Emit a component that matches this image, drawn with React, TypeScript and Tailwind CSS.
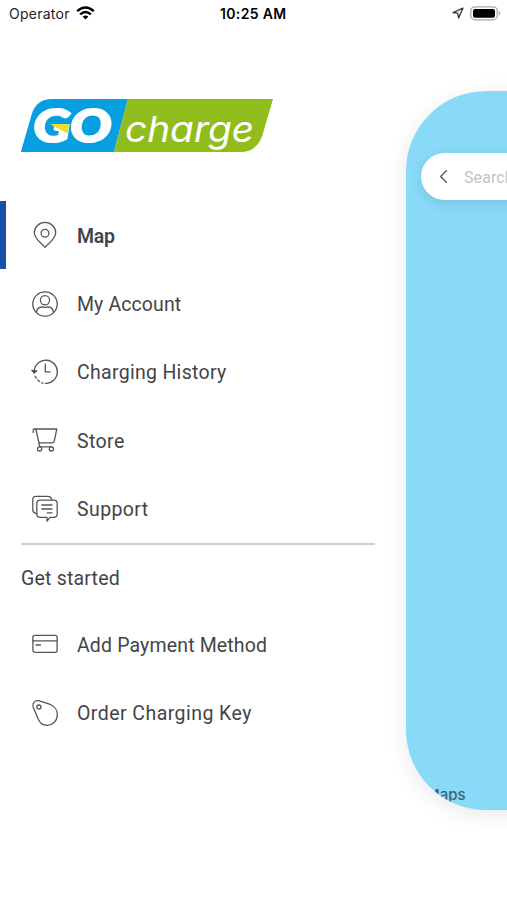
import React from 'react';
import { ChevronLeft } from 'lucide-react';

const iconProps = {
  width: 28,
  height: 28,
  viewBox: '0 0 28 28',
  fill: 'none',
  stroke: '#55565a',
  strokeWidth: 1.3,
  strokeLinecap: 'round' as const,
  strokeLinejoin: 'round' as const,
};

const PinIcon = () => (
  <svg {...iconProps}>
    <path d="M14 26.2C10.5 22.5 3.3 17.8 3.3 11.8a10.7 10.4 0 0 1 21.4 0C24.7 17.8 17.5 22.5 14 26.2Z" />
    <circle cx="14" cy="12.2" r="3.9" />
  </svg>
);

const AccountIcon = () => (
  <svg {...iconProps}>
    <circle cx="14" cy="14" r="12.2" />
    <circle cx="14" cy="10.2" r="4.6" />
    <path d="M5.5 22.5C5.9 18.3 8.5 17 11 17c1.2 0 1.7.5 3 .5s1.8-.5 3-.5c2.5 0 5.1 1.3 5.5 5.5" />
  </svg>
);

const HistoryIcon = () => (
  <svg {...iconProps}>
    <path d="M3.2 12.8A11.6 11.6 0 1 1 14.5 25.4" />
    <path d="M12 25.2l-1.2-.4M8.5 23.4l-1.8-1.4M5.2 20.1l-1-1.7" />
    <path d="M.8 12.4 3.2 15 5.8 12.8Z" fill="#55565a" />
    <path d="M14.3 6.2v7.7h4.8" />
  </svg>
);

const CartIcon = () => (
  <svg {...iconProps}>
    <path d="M2.2 6.4V4Q2.2 3 3.2 3H25.8L23.2 15.4Q22.9 16.9 21.4 16.9H8.2" />
    <path d="M4.9 3 8.8 20.9H20.5" />
    <circle cx="8.6" cy="22.9" r="2.1" />
    <circle cx="20.4" cy="22.9" r="2.1" />
  </svg>
);

const SupportIcon = () => (
  <svg {...iconProps}>
    <path d="M5.7 18.3H4.6Q1.8 17.6 1.8 14.8V4.5Q1.8 1.4 5 1.4H17Q20 1.4 20.8 4.6" />
    <path d="M9 5.2H22.8Q26.2 5.2 26.2 8.5V19Q26.2 22.3 22.8 22.3H19L16 26.2V22.3H9Q5.8 22.3 5.8 19V8.5Q5.8 5.2 9 5.2Z" />
    <path d="M10.8 10H21M10.8 14H21M16.2 17.8H21" />
  </svg>
);

const CardIcon = () => (
  <svg {...iconProps}>
    <rect x="1.9" y="5.3" width="24.2" height="17" rx="2" />
    <path d="M2 10.9H26M5 15H9.5" />
  </svg>
);

const KeyIcon = () => (
  <svg {...iconProps}>
    <path d="M2.1 8C1 4.2 3.8 1 7.6 1.7L18.5 5.2C23.5 7 26.6 11.5 26.3 16.4 26 22.2 21.4 26.4 16.1 26.3 12 26.2 9 23.9 7.4 20.4Z" />
    <circle cx="7.9" cy="8.1" r="2.1" />
  </svg>
);

type Item = { label: string; icon: React.FC; text: string; active?: boolean };

const mainItems: Item[] = [
  { label: 'Map', icon: PinIcon, text: 'font-semibold tracking-[-0.3px]', active: true },
  { label: 'My Account', icon: AccountIcon, text: 'tracking-[0.1px]' },
  { label: 'Charging History', icon: HistoryIcon, text: 'tracking-[0.3px]' },
  { label: 'Store', icon: CartIcon, text: 'tracking-[0.4px]' },
  { label: 'Support', icon: SupportIcon, text: 'tracking-[0.4px]' },
];

const startItems: Item[] = [
  { label: 'Add Payment Method', icon: CardIcon, text: 'tracking-[0.15px]' },
  { label: 'Order Charging Key', icon: KeyIcon, text: 'tracking-[0.45px]' },
];

const MenuItem: React.FC<{ item: Item }> = ({ item }) => {
  const Icon = item.icon;
  return (
    <li
      className={`flex h-[68.4px] items-center gap-[18px] border-l-[6px] pl-[25px] ${
        item.active ? 'border-[#1750a8]' : 'border-transparent'
      }`}
    >
      <Icon />
      <span className={`whitespace-nowrap pt-[3px] text-[19.5px] leading-6 ${item.text}`}>{item.label}</span>
    </li>
  );
};

const StatusBar = () => (
  <header className="relative flex h-7 items-center justify-between pb-[2px] pl-[9px] pr-[6px] font-[Inter,sans-serif] text-black">
    <div className="flex items-center gap-[6px]">
      <span className="text-[14px] tracking-[0.25px] text-[#222]">Operator</span>
      <svg width="19" height="14" viewBox="0 0 19 14" fill="none" stroke="#000" strokeWidth="2.5">
        <path d="M1.2 5.1Q9.5-2.1 17.8 5.1" />
        <path d="M4.2 8.4Q9.5 3.7 14.8 8.4" />
        <path d="M9.5 13.5 6.6 10.6Q9.5 8.3 12.4 10.6Z" fill="#000" stroke="none" />
      </svg>
    </div>
    <span className="absolute left-[220px] text-[14px] font-semibold tracking-[0.35px]">10:25 AM</span>
    <div className="flex items-center gap-[6px]">
      <svg width="12" height="12" viewBox="0 0 12 12" fill="none" stroke="#333" strokeWidth="1.3" strokeLinejoin="round">
        <path d="M11 1 1 5.6 5.7 6.2 6.6 11Z" />
      </svg>
      <svg width="31" height="15" viewBox="0 0 31 15">
        <rect x=".8" y=".8" width="26.4" height="13" rx="4" fill="#fff" stroke="#aaa" strokeWidth="1.3" />
        <rect x="3" y="3" width="22" height="8.8" rx="2" fill="#000" />
        <path d="M28.7 5v4.5Q30.3 8.7 30.3 7.2T28.7 5Z" fill="#aaa" />
      </svg>
    </div>
  </header>
);

const Logo = () => (
  <svg width="254" height="56" viewBox="0 0 254 56" className="ml-5 mt-[70px]">
    <path d="M.8 54 11.5 17Q16 1 32 1H108L94 54Z" fill="#079fdf" />
    <path d="M108 1H253L242.5 37Q237 54 220 54H94Z" fill="#91bd1c" />
    <text
      x="13.5"
      y="44"
      textLength="78"
      lengthAdjust="spacingAndGlyphs"
      fill="#fff"
      stroke="#fff"
      strokeWidth="2.2"
      className="font-[Lato,sans-serif] text-[46px] font-black italic"
    >
      GO
    </text>
    <path d="M30 26H49.5L47.5 35.5Z" fill="#f0dc32" />
    <text
      x="105"
      y="43.5"
      textLength="129"
      lengthAdjust="spacingAndGlyphs"
      fill="#fff"
      className="font-[Inter,sans-serif] text-[36px] italic [font-feature-settings:'cv11']"
    >
      charge
    </text>
  </svg>
);

const App: React.FC = () => (
  <div className="flex h-[900px] w-[507px] flex-col overflow-hidden bg-white font-[Roboto,sans-serif] text-[#434449]">
    <StatusBar />

    <div className="flex flex-1">
      {/* Side menu */}
      <nav className="w-[406px] shrink-0">
        <Logo />
        <ul className="mt-[47px]">
          {mainItems.map((item) => (
            <MenuItem key={item.label} item={item} />
          ))}
        </ul>
        <div className="ml-[21px] mr-[31px] border-t-2 border-[#cfcfcf]" />
        <h2 className="ml-[21px] mt-[22px] h-[43px] text-[19.5px] leading-6 tracking-[0.2px]">Get started</h2>
        <ul>
          {startItems.map((item) => (
            <MenuItem key={item.label} item={item} />
          ))}
        </ul>
      </nav>

      {/* Map screen pushed to the right */}
      <main className="mt-[63px] h-[719px] w-[375px] shrink-0 rounded-[80px] shadow-[0_5px_22px_rgba(0,0,0,0.09)]">
        <div className="flex h-full flex-col justify-between overflow-hidden rounded-[80px] bg-[#89daf7] pt-[62px]">
          <div className="ml-[15px] flex h-[47px] w-[345px] items-center rounded-full bg-white pl-[11px] shadow-[0_3px_12px_rgba(0,70,110,0.16)]">
            <ChevronLeft className="h-[23px] w-[23px] text-[#666]" strokeWidth={1.7} />
            <span className="ml-[9px] pt-[3px] text-[16px] tracking-[0.1px] text-[#c4c4c4]">Search</span>
          </div>
          <span className="mb-[4px] ml-[20px] font-[Inter,sans-serif] text-[15px] font-medium text-[#376574]">Maps</span>
        </div>
      </main>
    </div>
  </div>
);

export default App;
